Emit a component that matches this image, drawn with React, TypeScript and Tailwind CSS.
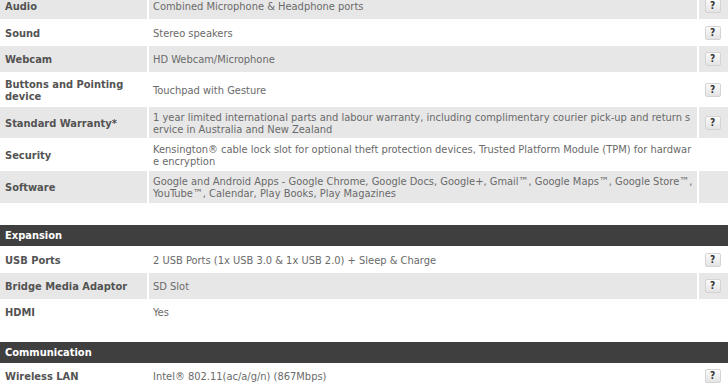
const font = "font-['DejaVu_Sans_Condensed','DejaVu_Sans',Verdana,sans-serif]";

type Spec = { label: string[]; value: string[]; h: string; help?: boolean; shaded?: boolean };

const general: Spec[] = [
  { label: ["Audio"], value: ["Combined Microphone & Headphone ports"], h: "h-[26px]", help: true, shaded: true },
  { label: ["Sound"], value: ["Stereo speakers"], h: "h-[27px]", help: true },
  { label: ["Webcam"], value: ["HD Webcam/Microphone"], h: "h-[26px]", help: true, shaded: true },
  { label: ["Buttons and Pointing", "device"], value: ["Touchpad with Gesture"], h: "h-[35px]", help: true },
  {
    label: ["Standard Warranty*"],
    value: [
      "1 year limited international parts and labour warranty, including complimentary courier pick-up and return s",
      "ervice in Australia and New Zealand",
    ],
    h: "h-[31px]",
    help: true,
    shaded: true,
  },
  {
    label: ["Security"],
    value: [
      "Kensington® cable lock slot for optional theft protection devices, Trusted Platform Module (TPM) for hardwar",
      "e encryption",
    ],
    h: "h-[33px]",
  },
  {
    label: ["Software"],
    value: [
      "Google and Android Apps - Google Chrome, Google Docs, Google+, Gmail™, Google Maps™, Google Store™,",
      "YouTube™, Calendar, Play Books, Play Magazines",
    ],
    h: "h-[32px]",
    shaded: true,
  },
];

const expansion: Spec[] = [
  {
    label: ["USB Ports"],
    value: ["2 USB Ports (1x USB 3.0 & 1x USB 2.0) + Sleep & Charge"],
    h: "h-[27px]",
    help: true,
  },
  { label: ["Bridge Media Adaptor"], value: ["SD Slot"], h: "h-[26px]", help: true, shaded: true },
  { label: ["HDMI"], value: ["Yes"], h: "h-[26px]" },
];

const communication: Spec[] = [
  { label: ["Wireless LAN"], value: ["Intel® 802.11(ac/a/g/n) (867Mbps)"], h: "h-[26px]", help: true },
];

function HelpButton() {
  return (
    <span className="flex h-[14px] w-[16px] items-center justify-center rounded-[2px] border border-[#d4d4d4] bg-gradient-to-b from-[#fafafa] to-[#e4e4e4] text-[10px] font-bold leading-none text-[#333]">
      ?
    </span>
  );
}

function Row({ spec }: { spec: Spec }) {
  const bg = spec.shaded ? "bg-[#e7e7e7]" : "bg-white";
  return (
    <div className={`grid grid-cols-[147px_548px_29px] gap-x-[2px] ${spec.h}`}>
      <div className={`${bg} flex flex-col justify-center pl-[5px] pt-[2px] text-[11px] font-bold leading-[12px] text-[#535353]`}>
        {spec.label.map((l) => (
          <span key={l} className="whitespace-nowrap">{l}</span>
        ))}
      </div>
      <div className={`${bg} flex flex-col justify-center overflow-hidden pl-[4px] pt-[2px] text-[11px] leading-[12px] text-[#6a6a6a]`}>
        {spec.value.map((v) => (
          <span key={v} className="whitespace-nowrap">{v}</span>
        ))}
      </div>
      <div className={`${bg} flex items-center justify-center pr-[2px]`}>{spec.help && <HelpButton />}</div>
    </div>
  );
}

function Header({ title }: { title: string }) {
  return (
    <div className="flex h-[21px] items-center bg-[#3f3f3f] pl-[5px] pt-[2px] text-[11px] font-bold text-white">
      {title}
    </div>
  );
}

export default function App() {
  return (
    <div className={`${font} h-[387px] w-[728px] overflow-hidden bg-white`}>
      <div className="-mt-[7px] flex flex-col">
        {general.map((s) => (
          <Row key={s.label[0]} spec={s} />
        ))}
        <div className="h-[22px]" />
        <Header title="Expansion" />
        {expansion.map((s) => (
          <Row key={s.label[0]} spec={s} />
        ))}
        <div className="h-[17px]" />
        <Header title="Communication" />
        {communication.map((s) => (
          <Row key={s.label[0]} spec={s} />
        ))}
      </div>
    </div>
  );
}
